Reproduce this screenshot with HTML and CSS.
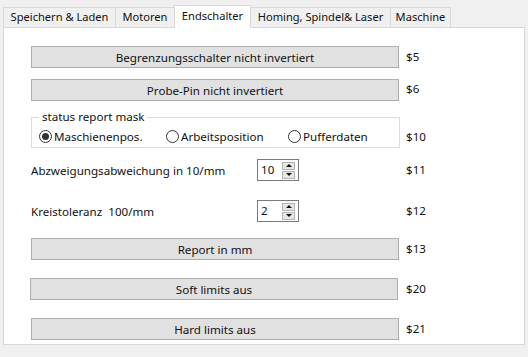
FILE: index.html
```html
<!DOCTYPE html>
<html lang="de">
<head>
<meta charset="utf-8">
<title>Endschalter</title>
<link rel="stylesheet" href="styles.css">
</head>
<body>
<div class="window">
  <div class="tabs">
    <div class="tab tab-1">Speichern &amp; Laden</div>
    <div class="tab tab-2">Motoren</div>
    <div class="tab tab-3 active">Endschalter</div>
    <div class="tab tab-4">Homing, Spindel&amp; Laser</div>
    <div class="tab tab-5">Maschine</div>
  </div>
  <div class="panel">
    <div class="row row-first">
      <button class="btn">Begrenzungsschalter nicht invertiert</button>
      <span class="code">$5</span>
    </div>
    <div class="row row-btn">
      <button class="btn">Probe-Pin nicht invertiert</button>
      <span class="code code-up">$6</span>
    </div>
    <div class="row row-group">
      <fieldset class="group">
        <legend class="group-title">status report mask</legend>
        <div class="radios">
          <label class="radio"><span class="dot checked"></span>Maschienenpos.</label>
          <label class="radio"><span class="dot"></span>Arbeitsposition</label>
          <label class="radio"><span class="dot"></span>Pufferdaten</label>
        </div>
      </fieldset>
      <span class="code code-bottom">$10</span>
    </div>
    <div class="row row-spin row-spin1">
      <span class="label">Abzweigungsabweichung in 10/mm</span>
      <div class="spin">
        <span class="spin-value">10</span>
        <div class="spin-arrows">
          <span class="arrow up"></span>
          <span class="arrow down"></span>
        </div>
      </div>
      <span class="code">$11</span>
    </div>
    <div class="row row-spin row-spin2">
      <span class="label">Kreistoleranz&nbsp; 100/mm</span>
      <div class="spin">
        <span class="spin-value">2</span>
        <div class="spin-arrows">
          <span class="arrow up"></span>
          <span class="arrow down"></span>
        </div>
      </div>
      <span class="code">$12</span>
    </div>
    <div class="row row-report">
      <button class="btn">Report in mm</button>
      <span class="code">$13</span>
    </div>
    <div class="row row-btn2">
      <button class="btn btn-shift">Soft limits aus</button>
      <span class="code">$20</span>
    </div>
    <div class="row row-btn2">
      <button class="btn">Hard limits aus</button>
      <span class="code">$21</span>
    </div>
  </div>
</div>
</body>
</html>
```
FILE: styles.css
```css
* { box-sizing: border-box; }

html, body {
  margin: 0;
  padding: 0;
  background: #f0f0f0;
}

body {
  font-family: "Noto Sans", "Open Sans", sans-serif;
  font-size: 11.6px;
  color: #111;
  width: 528px;
  height: 357px;
  overflow: hidden;
}

.window {
  padding: 5px 3px 0 3px;
}

.tabs {
  display: flex;
  align-items: flex-end;
  height: 22px;
  position: relative;
  z-index: 1;
  font-size: 11.1px;
}

.tab {
  height: 20px;
  line-height: 18px;
  padding: 0;
  text-align: center;
  border: 1px solid #d9d9d9;
  border-bottom: none;
  border-right: none;
  background: #f0f0f0;
  white-space: nowrap;
}

.tab-1 { width: 112px; }
.tab-2 { width: 59px; }
.tab-3 { width: 77px; }
.tab-4 { width: 139px; }
.tab-5 { width: 61px; border-right: 1px solid #d9d9d9; }

.tab.active {
  height: 23px;
  line-height: 20px;
  background: #fff;
  border-right: 1px solid #d9d9d9;
  margin-bottom: -1px;
}

.tab.active + .tab {
  border-left: none;
}

.panel {
  height: 318px;
  background: #fff;
  border: 1px solid #d9d9d9;
  width: 522px;
  padding: 18px 0 0 27px;
}

.row {
  display: grid;
  grid-template-columns: 368px auto;
  column-gap: 7px;
  align-items: center;
}

.row-btn { margin-top: 11px; }
.row-group {
  margin-top: 9px;
  grid-template-columns: 369px auto;
  column-gap: 6px;
  align-items: end;
}
.row-spin {
  grid-template-columns: 226px 142px auto;
  column-gap: 0;
}
.row-spin .code { margin-left: 7px; }
.row-spin1 { margin-top: 11px; }
.row-spin2 { margin-top: 19px; }
.row-report { margin-top: 16px; }
.row-btn2 { margin-top: 18px; }

.btn {
  width: 368px;
  height: 22px;
  margin: 0;
  padding: 0;
  border: 1px solid #adadad;
  background: #e1e1e1;
  font: inherit;
  color: #111;
  line-height: 19px;
}

.btn-shift { margin-left: -1px; }

.code {
  line-height: 20px;
}
.code-up { margin-bottom: 2px; }
.code-bottom { margin-bottom: 1px; }

.group {
  margin: 0;
  padding: 2px 7px 0 7px;
  border: 1px solid #dcdcdc;
  height: 38px;
  width: 369px;
}

.group-title {
  padding: 0 3px;
  line-height: 14px;
}

.radios {
  display: grid;
  grid-template-columns: 127px 122px auto;
  height: 21px;
  align-items: center;
}

.radio {
  display: flex;
  align-items: center;
  white-space: nowrap;
}

.dot {
  width: 13px;
  height: 13px;
  border: 1px solid #333;
  border-radius: 50%;
  margin-right: 2px;
  display: flex;
  align-items: center;
  justify-content: center;
  background: #fff;
}

.dot.checked::after {
  content: "";
  width: 7px;
  height: 7px;
  border-radius: 50%;
  background: #333;
}

.spin {
  width: 42px;
  height: 22px;
  border: 1px solid #7a7a7a;
  background: #fff;
  display: flex;
  align-items: center;
  padding-left: 3px;
}

.spin-value {
  flex: 1;
  line-height: 18px;
}

.spin-arrows {
  display: flex;
  flex-direction: column;
  gap: 1px;
  margin-right: 3px;
}

.arrow {
  width: 13px;
  height: 8px;
  background: #e6e6e6;
  border: 1px solid #b4b4b4;
  display: flex;
  align-items: center;
  justify-content: center;
}

.arrow.up::after {
  content: "";
  border-left: 3px solid transparent;
  border-right: 3px solid transparent;
  border-bottom: 3px solid #111;
}

.arrow.down::after {
  content: "";
  border-left: 3px solid transparent;
  border-right: 3px solid transparent;
  border-top: 3px solid #111;
}
```
